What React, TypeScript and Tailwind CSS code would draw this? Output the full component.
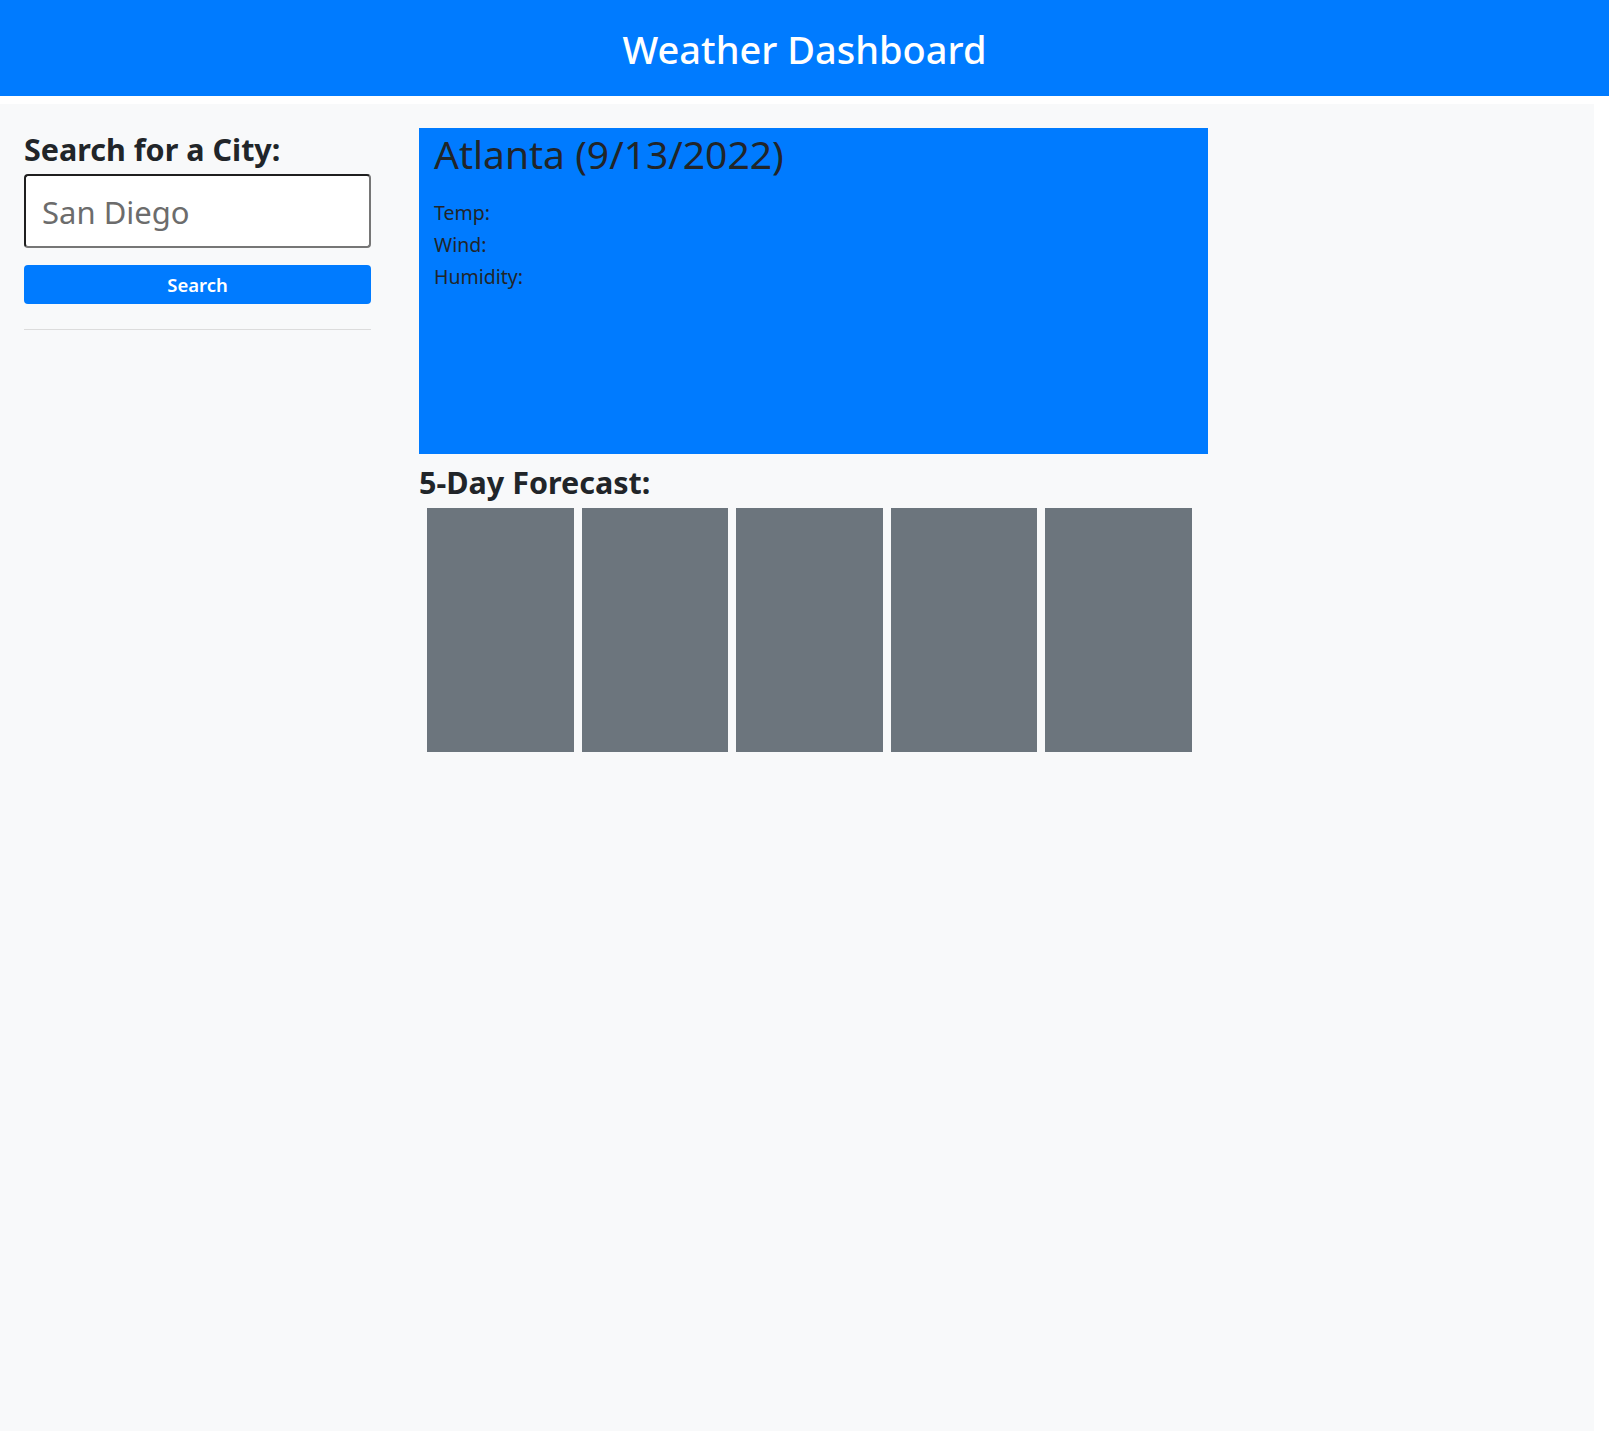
import React from 'react';

const font = { fontFamily: '"Noto Sans", "Open Sans", Arial, sans-serif' };

export default function App() {
    const days = [0, 1, 2, 3, 4];

    return (
        <div className="w-[1609px] min-h-[1431px] bg-white text-[#212529] font-['Noto_Sans',sans-serif]">
            {/* Header */}
            <header className="h-[96px] bg-[#007bff] flex items-center justify-center">
                <h1 className="text-white text-[38px] font-medium leading-none pt-[2px]">Weather Dashboard</h1>
            </header>

            {/* Body */}
            <div className="mt-2 w-[1594px] min-h-[1327px] bg-[#f8f9fa] flex pt-6">
                {/* Search column */}
                <aside className="ml-6 w-[347px] flex flex-col">
                    <h3 className="text-[30.5px] font-bold leading-[46px] -mt-[2px] h-[48px]">Search for a City:</h3>
                    <input
                        className="h-[74px] w-full bg-white rounded-[4px] border-2 border-t-[#1f1f1f] border-l-[#1f1f1f] border-r-[#767676] border-b-[#767676] px-[16px] pt-[2px] text-[31px] text-[#6c6c6c] outline-none"
                        defaultValue="San Diego"
                        style={font}
                    />
                    <button className="mt-[17px] h-[39px] w-full bg-[#007bff] rounded-[4px] text-white text-[18.5px] font-semibold pt-[1px]">
                        Search
                    </button>
                    <hr className="mt-[25px] border-0 border-t border-[#dcdcdc]" />
                </aside>

                {/* Main column */}
                <main className="ml-[48px] w-[789px] flex flex-col">
                    <section className="h-[326px] bg-[#007bff] px-[15px] pt-[2px]">
                        <h2 className="text-[39px] leading-[48px]">Atlanta (9/13/2022)</h2>
                        <div className="mt-[19px] text-[19.5px] leading-[32px]">
                            <p>Temp:</p>
                            <p>Wind:</p>
                            <p>Humidity:</p>
                        </div>
                    </section>

                    <h3 className="text-[30.5px] font-bold leading-[36px] mt-[10px] h-[44px]">5-Day Forecast:</h3>

                    <div className="flex gap-2 pl-2 pr-4">
                        {days.map(d => (
                            <div key={d} className="flex-1 h-[244px] bg-[#6c757d]" />
                        ))}
                    </div>
                </main>
            </div>
        </div>
    );
}
